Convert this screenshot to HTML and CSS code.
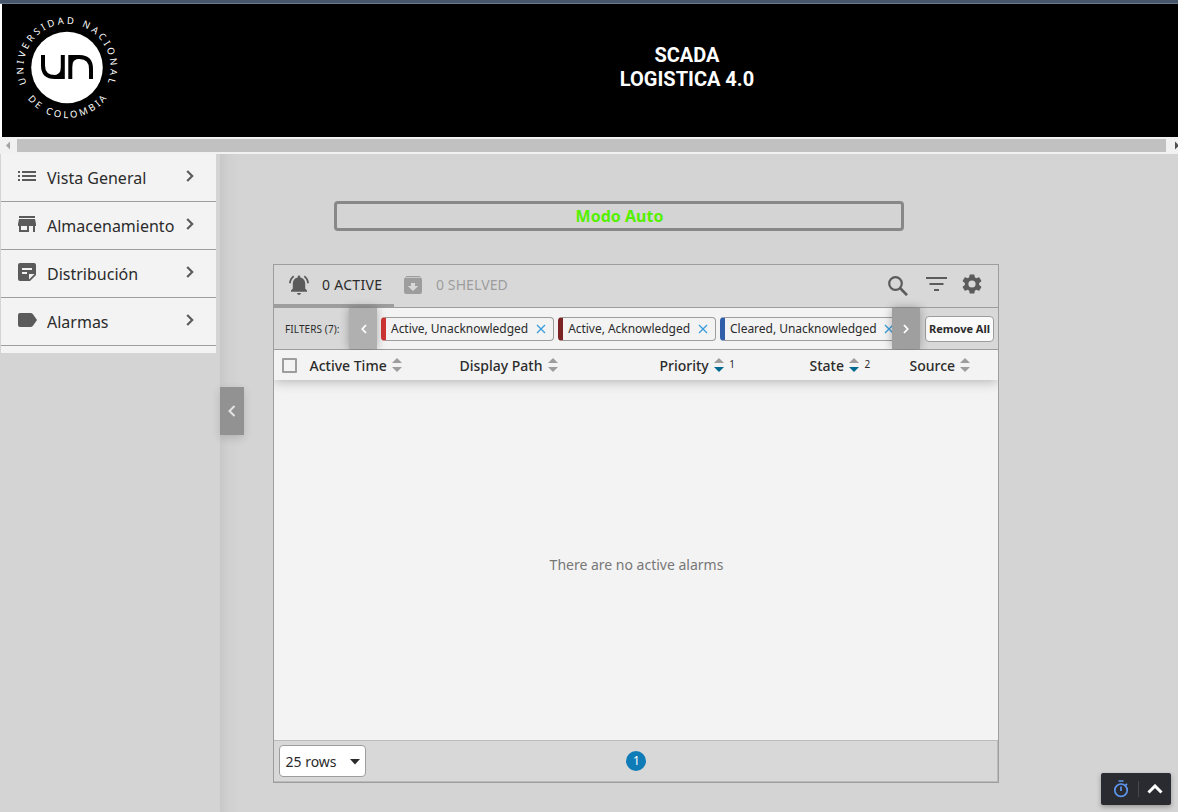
FILE: index.html
```html
<!DOCTYPE html>
<html lang="es">
<head>
<meta charset="utf-8">
<title>SCADA Logistica 4.0</title>
<link rel="stylesheet" href="styles.css">
</head>
<body>
<div class="topline"></div>
<header class="header">
  <svg class="logo" width="120" height="133" viewBox="0 4 120 133">
    <defs>
      <path id="arc-top" d="M27 84.500A43.500 43.500 0 1 1 107 84.500"/>
      <path id="arc-bottom" d="M16.500 67.500A50.500 50.500 0 0 0 117.500 67.500"/>
    </defs>
    <circle cx="67" cy="67.500" r="35.800" fill="#fff"/>
    <path d="M43 55V65.500Q43 77 55 77H62.800V55M70.300 79V57H79.500Q91 57 91 69V79" fill="none" stroke="#000" stroke-width="4"/>
    <path d="M61 67Q61 75.200 53 75.200H61zM72 67Q72 58.800 80 58.800H72z" fill="#000"/>
    <text class="ring"><textPath href="#arc-top" startOffset="1" textLength="168">UNIVERSIDAD NACIONAL</textPath></text>
    <text class="ring"><textPath href="#arc-bottom" startOffset="34" textLength="91">DE COLOMBIA</textPath></text>
  </svg>
  <h1 class="title">SCADA<br>LOGISTICA 4.0</h1>
</header>
<div class="hscroll">
  <svg width="17" height="17"><path d="M10 4.500V12.500L6 8.500z" fill="#a3a3a3"/></svg>
  <div class="thumb"></div>
  <svg width="12" height="17"><path d="M9 4.500V12.500L13 8.500z" fill="#505050"/></svg>
</div>
<div class="layout">
  <aside class="sidebar">
    <nav class="nav">
      <a class="nav-item"><svg viewBox="0 0 18 18"><path d="M0 3h2v2H0zM4 3h14v2H4zM0 7h2v2H0zM4 7h14v2H4zM0 11h2v2H0zM4 11h14v2H4z"/></svg><span>Vista General</span><svg class="chev" viewBox="0 0 8 12"><path d="M1.200 1L6.200 6L1.200 11"/></svg></a>
      <a class="nav-item"><svg viewBox="0 0 18 18"><path d="M1 0h16v2H1zM1 3h16l1 5v2h-1v6h-2v-6h-4v6H1v-6H0V8zM3 10v4h6v-4z"/></svg><span>Almacenamiento</span><svg class="chev" viewBox="0 0 8 12"><path d="M1.200 1L6.200 6L1.200 11"/></svg></a>
      <a class="nav-item"><svg viewBox="0 0 18 18"><path fill-rule="evenodd" d="M2 -1H16Q18 -1 18 1V11L12 17H2Q0 17 0 15V1Q0 -1 2 -1zM4 4v2h10V4zM4 8v2h5V8zM11 15.500L16.500 10H11z"/></svg><span>Distribución</span><svg class="chev" viewBox="0 0 8 12"><path d="M1.200 1L6.200 6L1.200 11"/></svg></a>
      <a class="nav-item"><svg viewBox="0 0 18 18"><path d="M2 1H12.500Q14 1 14.800 2L19 8L14.800 14Q14 15 12.500 15H2Q0 15 0 13V3Q0 1 2 1z"/></svg><span>Alarmas</span><svg class="chev" viewBox="0 0 8 12"><path d="M1.200 1L6.200 6L1.200 11"/></svg></a>
    </nav>
  </aside>
  <main class="main">
    <button class="handle"><svg width="8" height="12"><path d="M6.500 1L1.500 6L6.500 11" fill="none" stroke="#e4e4e4" stroke-width="2"/></svg></button>
    <div class="mode">Modo Auto</div>
    <section class="alarms">
      <div class="toolbar">
        <div class="tab tab-active">
          <svg width="20" height="20" viewBox="0 0 20 20"><path d="M10 0.500q1.300 0 1.300 1.300V2.500C14.700 3.200 16.200 5.700 16.200 8.500V13.500L18 15.500V16.800H2V15.500L3.800 13.500V8.500C3.800 5.700 5.300 3.200 8.700 2.500V1.800Q8.700.500 10 .500zM8 18h4q-.4 2-2 2t-2-2z"/><path d="M4.700 1.200Q1.100 4 1 8.200M15.300 1.200Q18.900 4 19 8.200" fill="none" stroke="#5b5b5b" stroke-width="1.800"/></svg>
          <span>0 ACTIVE</span>
        </div>
        <div class="tab tab-muted">
          <svg width="18" height="18" viewBox="0 0 18 18"><path fill-rule="evenodd" d="M2.500 0H15.500L18 3V16Q18 18 16 18H2Q0 18 0 16V3zM2.200 1.200L1.700 2H16.300L15.800 1.200zM7 7V10H3.800L9 15L14.200 10H11V7z"/></svg>
          <span>0 SHELVED</span>
        </div>
        <div class="tools">
          <svg width="20" height="20" viewBox="0 0 20 20"><circle cx="7.500" cy="7.500" r="6.300" fill="none" stroke="#5b5b5b" stroke-width="2.200"/><path d="M12 12L19 19.200" stroke="#5b5b5b" stroke-width="2.600"/></svg>
          <svg class="filter-icon" width="21" height="14" viewBox="0 0 21 14"><path d="M0 0h21v2H0zM3.500 6h14v2h-14zM8 12h5v2H8z"/></svg>
          <svg class="gear" width="20" height="20" viewBox="2 2 20 20"><path d="M19.140 12.940c.04-.3.060-.61.060-.94s-.02-.64-.07-.94l2.030-1.580a.49.49 0 0 0 .12-.61l-1.920-3.320a.49.49 0 0 0-.59-.22l-2.390.96a7 7 0 0 0-1.620-.94l-.36-2.540A.48.48 0 0 0 13.920 2.400h-3.840a.48.48 0 0 0-.47.410l-.36 2.540a7.300 7.300 0 0 0-1.620.94l-2.390-.96a.48.48 0 0 0-.59.220L2.740 8.870a.47.47 0 0 0 .12.610l2.030 1.580a6 6 0 0 0 0 1.880l-2.030 1.580a.49.49 0 0 0-.12.610l1.920 3.320c.12.220.37.290.59.220l2.390-.96c.5.380 1.030.7 1.620.94l.36 2.540c.05.240.24.410.48.410h3.840c.24 0 .44-.17.470-.41l.36-2.540a7.300 7.300 0 0 0 1.620-.94l2.390.96c.22.080.47 0 .59-.22l1.920-3.320a.47.47 0 0 0-.12-.61zM12 15.600a3.600 3.600 0 1 1 0-7.200 3.600 3.600 0 0 1 0 7.200z"/></svg>
        </div>
      </div>
      <div class="filters">
        <div class="filters-label">FILTERS (7):</div>
        <button class="scroll-btn scroll-left"><svg width="6" height="10"><path d="M5 1L1.300 5L5 9" /></svg></button>
        <div class="chips">
          <div class="chip chip-red"><span>Active, Unacknowledged</span><svg width="10" height="10"><path d="M1 1L9 9M9 1L1 9"/></svg></div>
          <div class="chip chip-maroon"><span>Active, Acknowledged</span><svg width="10" height="10"><path d="M1 1L9 9M9 1L1 9"/></svg></div>
          <div class="chip chip-blue"><span>Cleared, Unacknowledged</span><svg width="10" height="10"><path d="M1 1L9 9M9 1L1 9"/></svg></div>
        </div>
        <button class="scroll-btn scroll-right"><svg width="6" height="10"><path d="M1 1L4.700 5L1 9" /></svg></button>
        <div class="remove-wrap"><button class="remove">Remove All</button></div>
      </div>
      <div class="thead">
        <i class="check"></i>
        <div class="col col-time">Active Time<svg class="sort" viewBox="0 0 10 14"><path d="M0 5L5 0L10 5z"/><path d="M0 9L5 14L10 9z"/></svg></div>
        <div class="col col-path">Display Path<svg class="sort" viewBox="0 0 10 14"><path d="M0 5L5 0L10 5z"/><path d="M0 9L5 14L10 9z"/></svg></div>
        <div class="col col-priority">Priority<svg class="sort desc" viewBox="0 0 10 14"><path d="M0 5L5 0L10 5z"/><path d="M0 9L5 14L10 9z"/></svg><small>1</small></div>
        <div class="col col-state">State<svg class="sort desc" viewBox="0 0 10 14"><path d="M0 5L5 0L10 5z"/><path d="M0 9L5 14L10 9z"/></svg><small>2</small></div>
        <div class="col">Source<svg class="sort" viewBox="0 0 10 14"><path d="M0 5L5 0L10 5z"/><path d="M0 9L5 14L10 9z"/></svg></div>
      </div>
      <div class="tbody">There are no active alarms</div>
      <div class="footer">
        <div class="rows">25 rows<svg width="10" height="6"><path d="M0 0H10L5 5.500z" fill="#2b2b2b"/></svg></div>
        <div class="page">1</div>
      </div>
    </section>
    <div class="dock">
      <svg width="16" height="18" viewBox="0 0 16 18"><path d="M8 4A6.200 6.200 0 1 0 8 16.400A6.200 6.200 0 1 0 8 4zM5.500 1H10.500M8 6.500V11M12.600 5.300L14 3.900" fill="none" stroke="#5f97ee" stroke-width="1.700"/></svg>
      <i></i>
      <svg width="16" height="10"><path d="M1.500 8.500L8 2L14.500 8.500" fill="none" stroke="#fff" stroke-width="3"/></svg>
    </div>
  </main>
</div>
</body>
</html>
```

FILE: styles.css
```css
* { box-sizing: border-box; }
body {
  margin: 0;
  height: 812px;
  overflow: hidden;
  display: flex;
  flex-direction: column;
  background: #d4d4d4;
  color: #2b2b2b;
  font-family: "Noto Sans", sans-serif;
  font-size: 14px;
}
svg { display: block; flex: none; fill: #5b5b5b; }
button { font-family: inherit; border: 0; padding: 0; display: flex; align-items: center; justify-content: center; }

.topline { height: 4px; flex: none; background: #46566b; border-bottom: 1px solid #6d7989; }
.header { height: 133px; flex: none; background: #000; border-left: 2px solid #fff; display: flex; }
.logo { margin-left: -2px; overflow: visible; }
.ring { fill: #fff; font-size: 9.500px; }
.title {
  margin: 39px 0 0 444px;
  width: 246px;
  color: #fff;
  text-align: center;
  font: 700 20px/24px Roboto, sans-serif;
}

.hscroll { height: 17px; flex: none; background: #f1f1f1; display: flex; align-items: center; }
.thumb { flex: 1; height: 13px; background: #c1c1c1; }

.layout { flex: 1; display: flex; min-height: 0; }
.sidebar { width: 220px; flex: none; padding: 0 4px 0 1px; }
.nav { height: 199px; background: #f3f3f3; font-size: 16px; }
.nav-item { height: 48px; display: flex; align-items: center; padding: 0 22px 0 17px; border-bottom: 1px solid #9d9d9d; }
.nav-item > svg:first-child { width: 18px; height: 18px; margin: -2px 11px 0 0; overflow: visible; }
.nav-item span { flex: 1; white-space: nowrap; }
.nav-item .chev { width: 8px; height: 12px; margin-top: -3px; fill: none; stroke: #5b5b5b; stroke-width: 2.200; }

.main {
  flex: 1;
  position: relative;
  padding: 47px 0 0 53px;
  background: linear-gradient(90deg, #c8c8c8, #d0d0d0 8px, #d4d4d4 22px);
}
.handle {
  position: absolute;
  left: 0;
  top: 233px;
  width: 24px;
  height: 48px;
  background: #929292;
  box-shadow: 0 3px 8px rgba(0, 0, 0, .15);
}
.mode {
  width: 570px;
  height: 30px;
  margin-left: 61px;
  padding-left: 1px;
  border: 3px solid #888;
  border-radius: 4px;
  color: #55f000;
  font-size: 16px;
  font-weight: 700;
  line-height: 24px;
  text-align: center;
}

.alarms { width: 726px; height: 519px; margin-top: 33px; border: 1px solid #9d9d9d; display: flex; flex-direction: column; }
.toolbar { height: 43px; flex: none; display: flex; background: #d8d8d8; border-bottom: 1px solid #9d9d9d; }
.tab { display: flex; align-items: center; white-space: nowrap; }
.tab-active { width: 120px; padding-left: 15px; gap: 13px; border-bottom: 3px solid #9d9d9d; letter-spacing: .3px; }
.tab-active span { margin-top: -1px; }
.tab-muted { padding: 0 0 3px 10px; gap: 14px; color: #9d9d9d; letter-spacing: .1px; }
.tab-muted svg { fill: #9d9d9d; margin-top: 1px; }
.tab-muted span { margin-top: -1px; }
.tools { margin-left: auto; padding: 0 16px 1px 0; display: flex; align-items: center; gap: 16px; }
.tools .filter-icon { margin: -3px 0 0 2px; }
.tools .gear { margin: -4px 0 0 -1px; }

.filters { height: 42px; flex: none; display: flex; border-bottom: 1px solid #9d9d9d; background: #f3f3f3; }
.filters-label { width: 75px; padding: 1px 0 0 11px; display: flex; align-items: center; background: #d8d8d8; font-size: 10px; letter-spacing: .1px; white-space: nowrap; }
.scroll-btn { width: 28px; flex: none; position: relative; background: #b0b0b0; box-shadow: 0 0 10px rgba(0, 0, 0, .3); }
.scroll-btn path { fill: none; stroke: #fff; stroke-width: 1.800; }
.scroll-left { padding-left: 2px; }
.scroll-right { background: #9f9f9f; }
.chips { width: 515px; flex: none; padding-left: 4px; display: flex; align-items: center; gap: 4px; overflow: hidden; font-size: 12px; letter-spacing: -.03px; }
.chip { height: 24px; flex: none; padding: 0 7px 0 5px; display: flex; align-items: center; gap: 8px; border: 1px solid #9d9d9d; border-left: 5px solid; border-radius: 4px; white-space: nowrap; }
.chip path { stroke: #3b9ddb; stroke-width: 1.300; fill: none; }
.chip-red { border-left-color: #cf3434; }
.chip-maroon { border-left-color: #7b2323; }
.chip-blue { border-left-color: #305ea8; }
.remove-wrap { flex: 1; padding-left: 5px; display: flex; align-items: center; background: #d8d8d8; }
.remove { width: 69px; height: 26px; margin-top: 1px; padding-bottom: 2px; border: 1px solid #9d9d9d; border-radius: 4px; background: #fafafa; color: #2b2b2b; font-size: 11px; font-weight: 700; white-space: nowrap; }

.thead { height: 30px; flex: none; position: relative; display: flex; align-items: center; padding-left: 8px; background: #f3f3f3; box-shadow: 0 2px 12px rgba(0, 0, 0, .25); font-weight: 500; clip-path: inset(0 0 -20px 0); }
.check { width: 15px; height: 15px; margin-right: 12.500px; border: 2px solid #9d9d9d; border-radius: 1px; }
.col { display: flex; align-items: center; white-space: nowrap; }
.col-time { width: 150px; }
.col-path { width: 200px; }
.col-priority { width: 150px; }
.col-state { width: 100px; }
.sort { width: 10px; height: 14px; margin: 0 0 0 5px; fill: #9d9d9d; }
.desc path:last-child { fill: #00698f; }
.col small { margin: -3px 0 0 5.500px; font-size: 10px; font-weight: 400; }
.tbody { flex: 1; display: flex; align-items: center; justify-content: center; padding: 8px 0 0 1px; background: #f3f3f3; color: #777; }
.footer { height: 42px; flex: none; display: flex; align-items: center; padding-left: 5px; background: #d8d8d8; border: 1px solid #bbb; border-width: 1px 1px 1px 0; }
.rows { width: 87px; height: 32px; padding: 1px 5px 0 5.500px; display: flex; align-items: center; justify-content: space-between; border: 1px solid #9d9d9d; border-radius: 4px; background: #fff; }
.page { width: 20px; height: 20px; margin-left: 260px; padding-left: 1px; border-radius: 50%; background: #0f7cb8; color: #fff; font-size: 12px; line-height: 20px; text-align: center; }

.dock { position: absolute; right: 7px; bottom: 7px; width: 70px; height: 32px; padding: 0 8px 0 12px; display: flex; align-items: center; justify-content: space-between; border-radius: 2px; background: #292b30; box-shadow: 0 2px 5px rgba(0, 0, 0, .3); }
.dock i { width: 1px; height: 16px; background: #45474b; }
```
